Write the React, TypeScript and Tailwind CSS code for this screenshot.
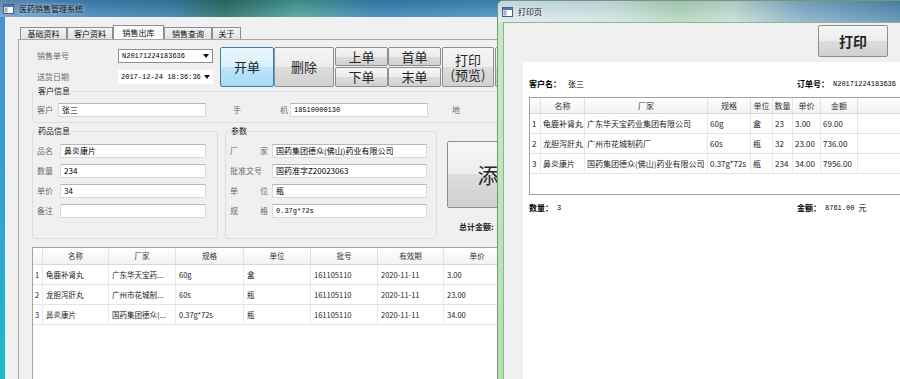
import React from "react"

type Kids = { children?: React.ReactNode; className?: string }

function WinIcon() {
  return (
    <svg width="11" height="10" viewBox="0 0 11 10">
      <rect x="0.5" y="0.5" width="10" height="9" fill="#fdfdfd" stroke="#52606e" />
      <rect x="1" y="1" width="9" height="2" fill="#3f7cc2" />
      <rect x="1.5" y="3.5" width="3" height="5" fill="#9db0c4" />
    </svg>
  )
}

function Arrow() {
  return (
    <svg width="6" height="4" viewBox="0 0 6 4">
      <path d="M0 0 L6 0 L3 4 Z" fill="#111" />
    </svg>
  )
}

function WinButton({ active, className = "", children }: Kids & { active?: boolean }) {
  return (
    <div
      className={`flex shrink-0 items-center justify-center rounded-[2px] border text-[13px] text-[#262626] ${
        active
          ? "border-[#3c7fb1] bg-[linear-gradient(#eaf6fd_0%,#d9f0fc_50%,#bee6fd_50%,#a7d9f5_100%)]"
          : "border-[#8e8f8f] bg-[linear-gradient(#f6f6f6_0%,#ececec_50%,#dddddd_50%,#d0d0d0_100%)]"
      } ${className}`}
    >
      {children}
    </div>
  )
}

function Field({ className = "", children }: Kids) {
  return (
    <div
      className={`flex h-[14px] shrink-0 items-center border border-[#d9dadd] border-t-[#b5b7bc] bg-white pl-[3px] text-[8px] leading-none ${className}`}
    >
      {children}
    </div>
  )
}

function Mono({ children }: Kids) {
  return (
    <span className="font-[family-name:'Liberation_Mono','Noto_Sans_CJK_SC',monospace] text-[7px] leading-none">
      {children}
    </span>
  )
}

function Group({ title, className = "", children }: Kids & { title: string }) {
  return (
    <div className={`shrink-0 rounded-[3px] border border-[#d5dfe5] ${className}`}>
      <div className="-mt-[6px] ml-[3px] w-fit bg-[#f0f0f0] px-[2px] text-[8px] leading-[10px] text-[#1a1a1a]">
        {title}
      </div>
      {children}
    </div>
  )
}

const tabs = [
  { t: "基础资料", w: "w-[47px]" },
  { t: "客户资料", w: "w-[46px]" },
  { t: "销售出库", w: "w-[51px]", on: true },
  { t: "销售查询", w: "w-[48px]" },
  { t: "关于", w: "w-[29px]" },
]

const leftCols = ["w-[10px]", "w-[66px]", "w-[67px]", "w-[68px]", "w-[67px]", "w-[67px]", "w-[66px]", "w-[67px]"]
const leftHead = ["", "名称", "厂家", "规格", "单位", "批号", "有效期", "单价"]
const leftRows = [
  ["1", "龟鹿补肾丸", "广东华天宝药...", "60g", "盒", "161105110", "2020-11-11", "3.00"],
  ["2", "龙胆泻肝丸", "广州市花城制...", "60s", "瓶", "161105110", "2020-11-11", "23.00"],
  ["3", "鼻炎康片", "国药集团德众(...", "0.37g*72s", "瓶", "161105110", "2020-11-11", "34.00"],
]

const rightCols = ["w-[11px]", "w-[44px]", "w-[123px]", "w-[43px]", "w-[22px]", "w-[20px]", "w-[28px]", "w-[37px]", "w-[60px]"]
const rightHead = ["", "名称", "厂家", "规格", "单位", "数量", "单价", "金额", ""]
const rightRows = [
  ["1", "龟鹿补肾丸", "广东华天宝药业集团有限公司", "60g", "盒", "23", "3.00", "69.00", ""],
  ["2", "龙胆泻肝丸", "广州市花城制药厂", "60s", "瓶", "32", "23.00", "736.00", ""],
  ["3", "鼻炎康片", "国药集团德众(佛山)药业有限公司", "0.37g*72s", "瓶", "234", "34.00", "7956.00", ""],
]

function LeftTable() {
  return (
    <div className="mt-[8px] flex w-[480px] flex-1 flex-col border-l border-t border-[#a3a3a3] bg-white text-[7.5px] leading-none">
      <div className="flex h-[17px] shrink-0 border-b border-[#d8d8d8] bg-[linear-gradient(#ffffff,#f1f2f4)]">
        {leftHead.map((h, i) => (
          <div key={i} className={`${leftCols[i]} flex shrink-0 items-center justify-center border-r border-[#e2e3e5] text-[#333]`}>
            {h}
          </div>
        ))}
      </div>
      {leftRows.map((r, ri) => (
        <div key={ri} className="flex h-[20px] shrink-0 border-b border-[#e4e4e4]">
          {r.map((c, i) => (
            <div
              key={i}
              className={`${leftCols[i]} flex shrink-0 items-center overflow-hidden whitespace-nowrap border-r border-[#e8e8e8] text-[#222] ${
                i === 0 ? "pl-[2px]" : "pl-[3px]"
              }`}
            >
              {c}
            </div>
          ))}
        </div>
      ))}
    </div>
  )
}

function RightTable() {
  return (
    <div className="mt-[8px] flex h-[98px] w-[420px] flex-col border border-r-0 border-[#a0a0a0] bg-white text-[8px] leading-none">
      <div className="flex h-[16px] shrink-0 border-b border-[#d8d8d8] bg-[linear-gradient(#ffffff,#f1f2f4)]">
        {rightHead.map((h, i) => (
          <div key={i} className={`${rightCols[i]} flex shrink-0 items-center justify-center border-r border-[#e2e3e5] text-[#333]`}>
            {h}
          </div>
        ))}
      </div>
      {rightRows.map((r, ri) => (
        <div key={ri} className="flex h-[20px] shrink-0 border-b border-[#e4e4e4]">
          {r.map((c, i) => (
            <div
              key={i}
              className={`${rightCols[i]} flex shrink-0 items-center overflow-hidden whitespace-nowrap border-r border-[#e8e8e8] pl-[2px] text-[#222]`}
            >
              {c}
            </div>
          ))}
        </div>
      ))}
    </div>
  )
}

function MainWindow() {
  return (
    <div className="flex h-full w-[497px] shrink-0 flex-col overflow-hidden bg-[linear-gradient(180deg,#4f90cc_0%,#35a2cc_55%,#20b8c9_100%)]">
      {/* title bar */}
      <div className="flex h-[17px] shrink-0 items-center gap-[5px] bg-[linear-gradient(180deg,rgba(10,40,80,0.25),rgba(255,255,255,0.08)),linear-gradient(90deg,#74a7d2_0%,#4f8fc2_14%,#3f86aa_34%,#2f7468_45%,#52a89c_60%,#3f8ab8_76%,#4c97c2_100%)] pl-[3px]">
        <WinIcon />
        <span className="text-[8px] leading-none text-[#111] [text-shadow:0_0_4px_#ffffff]">医药销售管理系统</span>
      </div>

      {/* client */}
      <div className="ml-[5px] flex min-h-0 flex-1 flex-col overflow-hidden bg-[#f0f0f0]">
        <div className="mt-[8px] flex h-[14px] shrink-0 items-end pl-[15px]">
          {tabs.map((tab) => (
            <div
              key={tab.t}
              className={`${tab.w} flex shrink-0 items-center justify-center border border-b-0 border-[#8c8e94] text-[8px] leading-none text-[#111] ${
                tab.on ? "h-[14px] bg-[#fbfbfb]" : "h-[12px] bg-[linear-gradient(#f3f3f3,#e2e2e2)]"
              }`}
            >
              {tab.t}
            </div>
          ))}
        </div>

        <div className="ml-[13px] flex min-h-0 flex-1 flex-col border-l border-t border-[#a4a6ab] pl-[13px]">
          {/* order row */}
          <div className="mt-[7px] flex h-[40px] shrink-0">
            <div className="flex w-[188px] shrink-0 flex-col pl-[5px]">
              <div className="mt-[2px] flex h-[14px] items-center">
                <span className="w-[81px] text-[8px] leading-none text-[#6a6a6a]">销售单号</span>
                <div className="flex h-[14px] w-[95px] items-center justify-between border border-[#8d8f94] bg-white pl-[3px] pr-[3px]">
                  <Mono>N20171224183636</Mono>
                  <Arrow />
                </div>
              </div>
              <div className="mt-[7px] flex h-[14px] items-center">
                <span className="w-[81px] text-[8px] leading-none text-[#6a6a6a]">送货日期</span>
                <div className="flex h-[14px] w-[95px] items-center justify-between bg-white pl-[3px] pr-[3px]">
                  <Mono>2017-12-24 18:36:36</Mono>
                  <Arrow />
                </div>
              </div>
            </div>
            <div className="flex shrink-0">
              <WinButton active className="h-[40px] w-[54px]">开单</WinButton>
              <WinButton className="h-[40px] w-[60px]">删除</WinButton>
              <div className="ml-[1px] flex flex-col gap-[1px]">
                <WinButton className="h-[19px] w-[53px] text-[12px]">上单</WinButton>
                <WinButton className="h-[20px] w-[53px] text-[12px]">下单</WinButton>
              </div>
              <div className="flex flex-col gap-[1px]">
                <WinButton className="h-[19px] w-[53px] text-[12px]">首单</WinButton>
                <WinButton className="h-[20px] w-[53px] text-[12px]">末单</WinButton>
              </div>
              <WinButton className="ml-[1px] h-[40px] w-[52px] text-[12.5px]">
                <span className="text-center leading-[15px]">
                  打印
                  <br />
                  (预览)
                </span>
              </WinButton>
              <WinButton className="ml-[1px] h-[40px] w-[40px]" />
            </div>
          </div>

          {/* customer */}
          <Group title="客户信息" className="mt-[4px] w-[480px] pb-[5px]">
            <div className="mt-[7px] flex h-[14px] items-center pl-[4px] text-[8px] leading-none">
              <span className="w-[21px] text-[#6a6a6a]">客户</span>
              <Field className="w-[148px]">张三</Field>
              <span className="ml-[27px] w-[8px] text-[#6a6a6a]">手</span>
              <span className="ml-[39px] w-[10px] text-[#6a6a6a]">机</span>
              <Field className="w-[138px]">
                <Mono>18510000130</Mono>
              </Field>
              <span className="ml-[24px] text-[#6a6a6a]">地</span>
            </div>
          </Group>

          {/* goods + params */}
          <div className="mt-[8px] flex shrink-0">
            <Group title="药品信息" className="h-[108px] w-[186px]">
              <div className="mt-[8px] flex flex-col gap-[6px] pl-[4px] text-[8px] leading-none">
                {[
                  ["品名", "鼻炎康片"],
                  ["数量", "234"],
                  ["单价", "34"],
                  ["备注", ""],
                ].map(([l, v]) => (
                  <div key={l} className="flex h-[14px] items-center">
                    <span className="w-[23px] text-[#6a6a6a]">{l}</span>
                    <Field className="w-[146px]">{v}</Field>
                  </div>
                ))}
              </div>
            </Group>
            <Group title="参数" className="ml-[7px] h-[108px] w-[212px]">
              <div className="mt-[8px] flex flex-col gap-[6px] pl-[4px] text-[8px] leading-none">
                {[
                  [["厂", "家"], "国药集团德众(佛山)药业有限公司", false],
                  [["批准文号"], "国药准字Z20023063", false],
                  [["单", "位"], "瓶", false],
                  [["规", "格"], "0.37g*72s", true],
                ].map(([l, v, m], i) => (
                  <div key={i} className="flex h-[14px] items-center">
                    <span className="flex w-[42px] justify-between pr-[4px] text-[#6a6a6a]">
                      {(l as string[]).map((s) => (
                        <span key={s}>{s}</span>
                      ))}
                    </span>
                    <Field className="w-[155px]">{m ? <Mono>{v as string}</Mono> : (v as string)}</Field>
                  </div>
                ))}
              </div>
            </Group>
            <div className="ml-[10px] flex shrink-0 flex-col">
              <WinButton className="mt-[10px] h-[67px] w-[82px] text-[21px]">添</WinButton>
              <span className="ml-[12px] mt-[15px] text-[8px] font-bold leading-none text-[#222]">总计金额:</span>
            </div>
          </div>

          <LeftTable />
        </div>
      </div>
    </div>
  )
}

function PrintWindow() {
  return (
    <div className="flex h-full min-w-0 flex-1 flex-col overflow-hidden rounded-tl-[6px] border-l border-t border-[#6f9a78] bg-[linear-gradient(180deg,#c9e9c4,#b2e0ad)]">
      <div className="flex h-[21px] shrink-0 items-center gap-[5px] bg-[linear-gradient(180deg,rgba(30,60,100,0.12),rgba(255,255,255,0.2)),linear-gradient(90deg,#dbe9ef_0%,#cfe3e2_28%,#b0d4b6_45%,#c3dcd2_58%,#7ea9c3_76%,#4a84aa_100%)] pl-[4px]">
        <WinIcon />
        <span className="text-[8px] leading-none text-[#111] [text-shadow:0_0_4px_#ffffff]">打印页</span>
      </div>
      <div className="ml-[5px] flex min-h-0 flex-1 flex-col border-l border-t border-[#8fb39a] bg-[#f0f0f0]">
        <div className="flex shrink-0 justify-end pr-[12px] pt-[2px]">
          <WinButton className="h-[32px] w-[70px] text-[14px] font-bold">打印</WinButton>
        </div>
        <div className="ml-[19px] mt-[5px] flex flex-1 flex-col bg-white pl-[6px]">
          <div className="mt-[17px] flex h-[10px] shrink-0 items-center whitespace-nowrap text-[8px] leading-none">
            <div className="flex w-[268px] items-center">
              <span className="w-[39px] font-bold">客户名：</span>
              <span>张三</span>
            </div>
            <span className="w-[36px] font-bold">订单号：</span>
            <Mono>N20171224183636</Mono>
          </div>
          <RightTable />
          <div className="mt-[8px] flex h-[10px] shrink-0 items-center whitespace-nowrap text-[8px] leading-none">
            <div className="flex w-[268px] items-center">
              <span className="w-[28px] font-bold">数量：</span>
              <Mono>3</Mono>
            </div>
            <span className="w-[28px] font-bold">金额：</span>
            <Mono>8761.00</Mono>
            <span className="ml-[4px]">元</span>
          </div>
        </div>
      </div>
    </div>
  )
}

export default function App() {
  return (
    <div className="flex h-[379px] w-[900px] overflow-hidden bg-[#2f7aa0] font-[family-name:'Noto_Sans_CJK_SC',sans-serif] text-black">
      <MainWindow />
      <PrintWindow />
    </div>
  )
}
